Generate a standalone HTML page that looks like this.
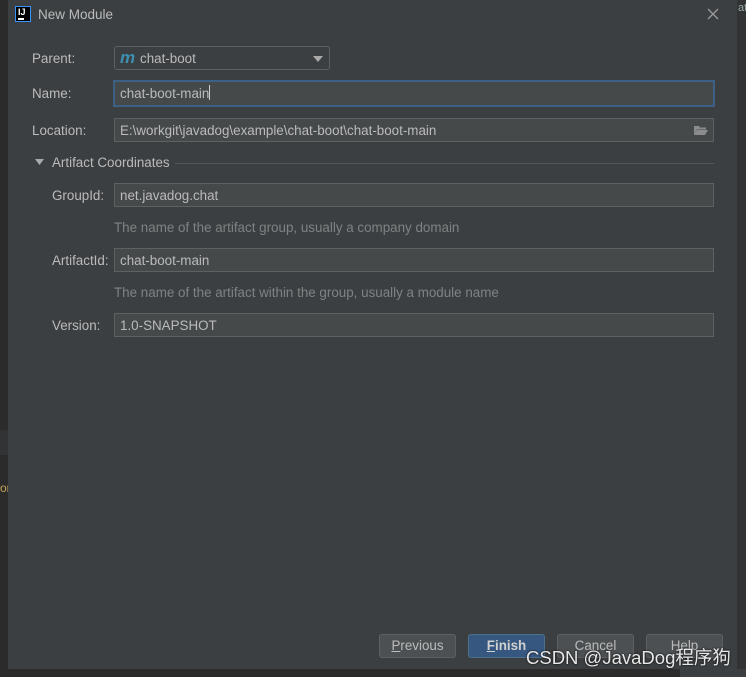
<!DOCTYPE html>
<html><head><meta charset="utf-8"><style>
*{margin:0;padding:0;box-sizing:border-box}
body{width:746px;height:677px;background:#2b2b2b;position:relative;overflow:hidden;font-family:"Liberation Sans","Noto Sans CJK SC",sans-serif;font-size:13.4px;color:#bbbbbb}
#dlg{position:absolute;left:8px;top:0;width:729px;height:669px;background:#3c3f41}
.a{position:absolute;white-space:nowrap}
.f{position:absolute;background:#45494a;border:1px solid #5e6161;height:24px;line-height:22px;padding-left:5px;color:#bbbbbb}
.btn{position:absolute;top:634px;height:24px;width:77px;border:1px solid #5e6060;background:#4c5052;border-radius:3px;text-align:center;line-height:22px;color:#bbbbbb}
</style></head><body>
<div class="a" style="left:0;top:430px;width:8px;height:25px;background:#313335"></div>
<div class="a" style="left:0;top:481px;font-size:12px;color:#c7a35a;">or</div>
<div class="a" style="left:737px;top:0;width:9px;height:677px;background:#313335"></div>
<div class="a" style="left:738px;top:2px;font-size:11px;color:#9aa">at</div>
<div class="a" style="left:680px;top:669px;width:66px;height:8px;background:#3c3f41"></div>
<div id="dlg">
 <div class="a" style="left:7px;top:6px;width:16px;height:16px;border:1px solid #3592ff;background:#000"><div style="position:absolute;left:2px;top:1px;font-size:9px;font-weight:bold;color:#fff;line-height:9px">IJ</div><div style="position:absolute;left:2px;top:11px;width:6px;height:1.5px;background:#fff"></div></div>
 <div class="a" style="left:30px;top:7px;font-size:13.5px">New Module</div>
 <svg class="a" style="left:699px;top:8px" width="12" height="12"><path d="M1 1L11 11M11 1L1 11" stroke="#9a9a9a" stroke-width="1.3"/></svg>

 <div class="a" style="left:24px;top:51px">Parent:</div>
 <div class="a" style="left:106px;top:46px;width:216px;height:24px;border:1px solid #5e6060;border-radius:3px;background:#3c3f41"></div>
 <div class="a" style="left:112px;top:48px;font-size:17px;font-weight:bold;font-style:italic;color:#3d8fb0">m</div>
 <div class="a" style="left:132px;top:51px">chat-boot</div>
 <svg class="a" style="left:305px;top:56px" width="10" height="6"><path d="M0 0H10L5 6Z" fill="#aaa"/></svg>

 <div class="a" style="left:24px;top:86px">Name:</div>
 <div class="f" style="left:105px;top:80px;width:602px;height:27px;border:2px solid #3d6185;line-height:24px">chat-boot-main<span style="display:inline-block;width:1px;height:15px;background:#ccc;vertical-align:-2px"></span></div>

 <div class="a" style="left:24px;top:123px">Location:</div>
 <div class="f" style="left:106px;top:118px;width:600px;line-height:23px">E:\workgit\javadog\example\chat-boot\chat-boot-main</div>
 <svg class="a" style="left:685px;top:124px" width="16" height="12"><path d="M1 2h5l1 1.5h6v2H4L1 11Z" fill="#8a8c8e"/><path d="M4 6h11l-3 5H1Z" fill="#8a8c8e"/></svg>

 <svg class="a" style="left:27px;top:159px" width="10" height="6"><path d="M0 0H9L4.5 6Z" fill="#aaa"/></svg>
 <div class="a" style="left:44px;top:155px">Artifact Coordinates</div>
 <div class="a" style="left:167px;top:163px;width:539px;height:1px;background:#515658"></div>

 <div class="a" style="left:44px;top:188px">GroupId:</div>
 <div class="f" style="left:106px;top:183px;width:600px;line-height:23px">net.javadog.chat</div>
 <div class="a" style="left:106px;top:220px;color:#7f8283">The name of the artifact group, usually a company domain</div>

 <div class="a" style="left:44px;top:253px">ArtifactId:</div>
 <div class="f" style="left:106px;top:248px;width:600px;line-height:23px">chat-boot-main</div>
 <div class="a" style="left:106px;top:285px;color:#7f8283">The name of the artifact within the group, usually a module name</div>

 <div class="a" style="left:44px;top:318px">Version:</div>
 <div class="f" style="left:106px;top:313px;width:600px;line-height:23px">1.0-SNAPSHOT</div>

 <div class="btn" style="left:371px"><u>P</u>revious</div>
 <div class="btn" style="left:460px;background:#365880;border-color:#4c708c;font-weight:bold;color:#d0d0d0"><u>F</u>inish</div>
 <div class="btn" style="left:549px">Cancel</div>
 <div class="btn" style="left:638px">Help</div>
</div>
<div class="a" style="left:526px;top:644px;font-size:18.5px;color:#e8e8e8;text-shadow:0 0 2px #000">CSDN @JavaDog程序狗</div>
</body></html>
